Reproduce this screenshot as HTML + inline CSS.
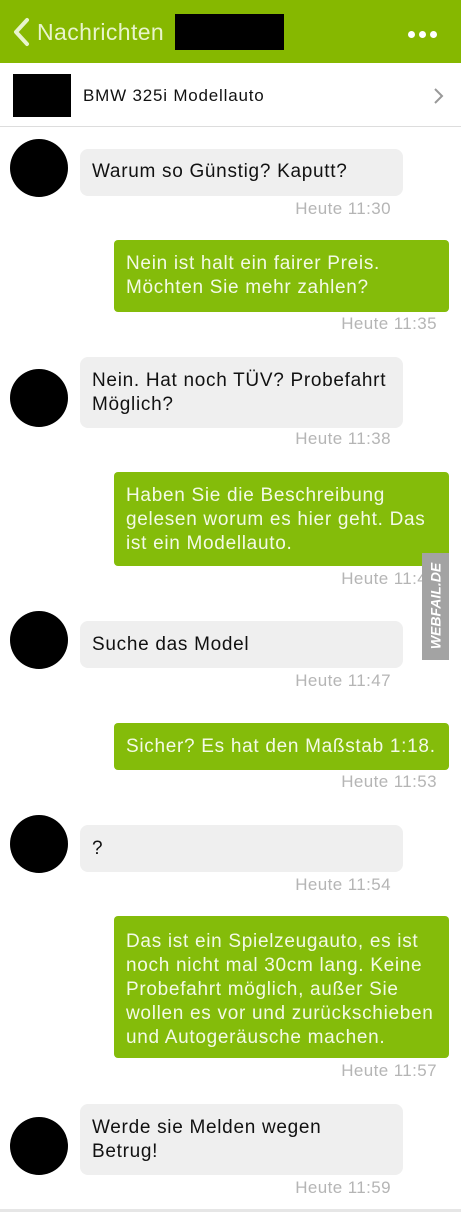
<!DOCTYPE html>
<html><head><meta charset="utf-8"><style>
*{margin:0;padding:0;box-sizing:border-box}
body{width:461px;height:1212px;background:#fff;position:relative;overflow:hidden;font-family:"Liberation Sans",sans-serif}
.a{position:absolute}
.hdr{left:0;top:0;width:461px;height:63px;background:#86b800}
.av{width:58px;height:58px;border-radius:50%;background:#000;left:10px}
.g{background:#efefef;border-radius:8px;left:80px;width:323px;color:#111;font-size:19px;letter-spacing:0.7px;line-height:24px;padding:0 12px;white-space:nowrap}
.gr{background:#84bc0a;border-radius:4px;left:114px;width:335px;color:#f3fae6;font-size:19px;letter-spacing:0.7px;line-height:24px;padding:0 12px;white-space:nowrap}
.t{color:#b5b5b5;font-size:17px;letter-spacing:0.4px;text-align:right;width:200px}
</style></head><body>
<div class="a hdr"></div>
<svg class="a" style="left:11px;top:17px" width="20" height="30"><path d="M16 3 L5 15 L16 27" stroke="#e8f4cc" stroke-width="4" fill="none" stroke-linecap="round" stroke-linejoin="round"/></svg>
<div class="a" style="left:37px;top:19px;color:#e8f4cc;font-size:23px;letter-spacing:0.4px">Nachrichten</div>
<div class="a" style="left:175px;top:14px;width:109px;height:36px;background:#000"></div>
<div class="a" style="left:408px;top:31px;width:7px;height:7px;border-radius:50%;background:#fff"></div>
<div class="a" style="left:419px;top:31px;width:7px;height:7px;border-radius:50%;background:#fff"></div>
<div class="a" style="left:430px;top:31px;width:7px;height:7px;border-radius:50%;background:#fff"></div>
<div class="a" style="left:13px;top:74px;width:58px;height:43px;background:#000"></div>
<div class="a" style="left:83px;top:86px;font-size:17px;letter-spacing:0.8px;color:#111">BMW 325i Modellauto</div>
<svg class="a" style="left:433px;top:87px" width="12" height="18"><path d="M2 2 L9 9 L2 16" stroke="#999" stroke-width="2" fill="none"/></svg>
<div class="a" style="left:0;top:126px;width:461px;height:1px;background:#ddd"></div>

<div class="a av" style="top:139px"></div>
<div class="a g" style="top:149px;height:47px;padding-top:11px">Warum so Günstig? Kaputt?</div>
<div class="a t" style="left:191px;top:199px">Heute 11:30</div>

<div class="a gr" style="top:240px;height:72px;padding-top:12px">Nein ist halt ein fairer Preis.<br>Möchten Sie mehr zahlen?</div>
<div class="a t" style="left:237px;top:314px">Heute 11:35</div>

<div class="a av" style="top:369px"></div>
<div class="a g" style="top:357px;height:71px;padding-top:12px">Nein. Hat noch TÜV? Probefahrt<br>Möglich?</div>
<div class="a t" style="left:191px;top:429px">Heute 11:38</div>

<div class="a gr" style="top:472px;height:94px;padding-top:12px">Haben Sie die Beschreibung<br>gelesen worum es hier geht. Das<br>ist ein Modellauto.</div>
<div class="a t" style="left:237px;top:569px">Heute 11:42</div>

<div class="a av" style="top:611px"></div>
<div class="a g" style="top:621px;height:47px;padding-top:12px">Suche das Model</div>
<div class="a t" style="left:191px;top:671px">Heute 11:47</div>

<div class="a gr" style="top:723px;height:47px;padding-top:12px">Sicher? Es hat den Maßstab 1:18.</div>
<div class="a t" style="left:237px;top:772px">Heute 11:53</div>

<div class="a av" style="top:815px"></div>
<div class="a g" style="top:825px;height:47px;padding-top:12px">?</div>
<div class="a t" style="left:191px;top:875px">Heute 11:54</div>

<div class="a gr" style="top:916px;height:142px;padding-top:14px">Das ist ein Spielzeugauto, es ist<br>noch nicht mal 30cm lang. Keine<br>Probefahrt möglich, außer Sie<br>wollen es vor und zurückschieben<br>und Autogeräusche machen.</div>
<div class="a t" style="left:237px;top:1061px">Heute 11:57</div>

<div class="a av" style="top:1117px"></div>
<div class="a g" style="top:1104px;height:71px;padding-top:12px">Werde sie Melden wegen<br>Betrug!</div>
<div class="a t" style="left:191px;top:1178px">Heute 11:59</div>
<div class="a" style="left:0;top:1209px;width:461px;height:3px;background:#e6e6e6"></div>

<div class="a" style="left:422px;top:553px;width:27px;height:107px;background:#a3a3a3"></div>
<div class="a" style="left:382px;top:596px;width:107px;height:20px;transform:rotate(-90deg);color:#fff;font-weight:bold;font-style:italic;font-size:14px;text-align:center;line-height:20px">WEBFAIL.DE</div>
</body></html>
